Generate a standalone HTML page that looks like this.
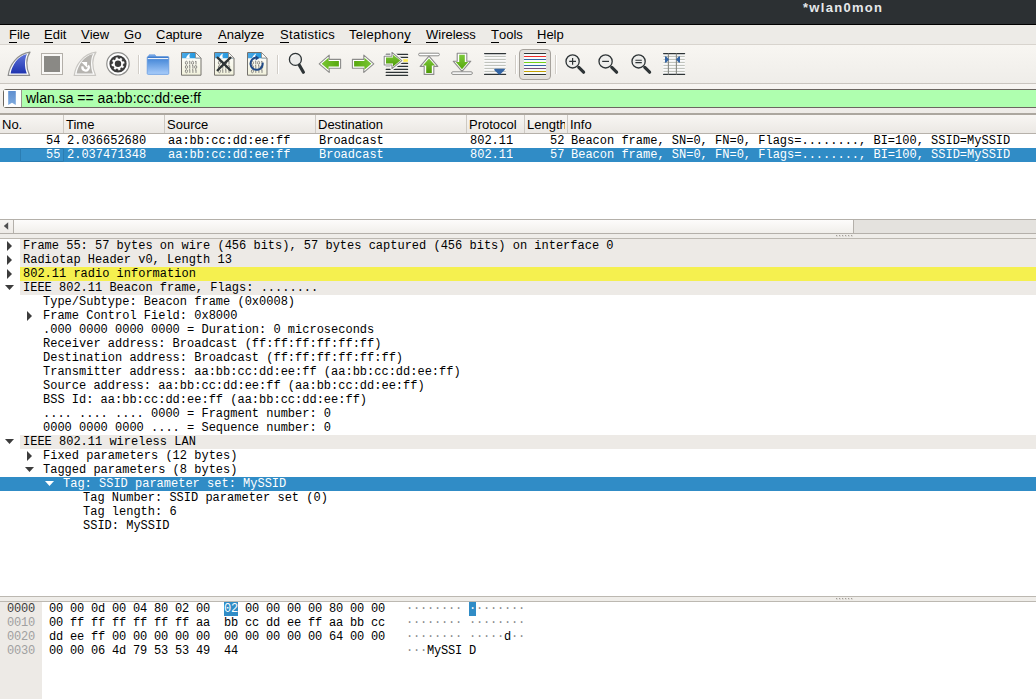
<!DOCTYPE html>
<html><head><meta charset="utf-8">
<style>
*{margin:0;padding:0;box-sizing:border-box}
html,body{width:1036px;height:699px;overflow:hidden;background:#edebe7;font-family:"Liberation Sans",sans-serif;color:#000}
.a{position:absolute}
#title{left:0;top:0;width:1036px;height:24px;background:#2c3033;border-bottom:1px solid #000;height:25px}
#title span{position:absolute;left:803px;top:0px;font:bold 13px "Liberation Sans",sans-serif;letter-spacing:1.3px;color:#e6e8ea}
#menu{left:0;top:25px;width:1036px;height:19px;background:#edebe7}
#menu span{position:absolute;top:1px;font-size:13px;line-height:17px;white-space:pre}
#menu u{text-decoration:none;border-bottom:1px solid #000;display:inline-block;line-height:14px}
#tbline{left:0;top:44px;width:1036px;height:1px;background:#d8d4ce}
#toolbar{left:0;top:45px;width:1036px;height:38px;background:linear-gradient(#f8f6f2,#efede9)}
#tbline2{left:0;top:83px;width:1036px;height:1px;background:#c9c5bf}
#fbar{left:0;top:84px;width:1036px;height:29px;background:linear-gradient(#f7f5f2,#eeebe7)}
#fbox{left:3px;top:89px;width:1100px;height:19px;border:1px solid #6b6660;border-radius:3px;background:#afffaf}
#fbm{left:4px;top:90px;width:18px;height:17px;background:#fff;border-right:1px solid #9c9891}
#ftext{left:26px;top:89px;font-size:14px;line-height:19px;white-space:pre}
#plist{left:0;top:113px;width:1036px;height:121px;background:#fff}
#phead{left:0;top:113px;width:1036px;height:21px;border-top:2px solid #aca79f;background:linear-gradient(#f8f6f3,#ebe8e4);border-bottom:1px solid #b6b1aa}
.ph{position:absolute;top:0;height:18px;font-size:13px;line-height:20px;white-space:pre;padding-left:2px;overflow:hidden;border-right:1px solid #cdc9c3}
.mono{font-family:"Liberation Mono",monospace;font-size:12px;white-space:pre}
.row{position:absolute;left:0;width:1036px;height:14px;line-height:14px}
.sel{background:#308cc6;color:#fff}
.cell{position:absolute;top:0;height:14px;overflow:hidden}
.bx{line-height:14px;letter-spacing:-0.2px}
.dt{font-style:normal;color:#8c8c8c}
.hl{font-weight:normal;background:#308cc6;color:#fff}
</style></head><body>
<div id="title" class="a"><span>*wlan0mon</span></div>
<div id="menu" class="a">
<span style="left:9px"><u>F</u>ile</span>
<span style="left:44px"><u>E</u>dit</span>
<span style="left:81px"><u>V</u>iew</span>
<span style="left:124px"><u>G</u>o</span>
<span style="left:156px"><u>C</u>apture</span>
<span style="left:218px"><u>A</u>nalyze</span>
<span style="left:280px;letter-spacing:0.3px"><u>S</u>tatistics</span>
<span style="left:349px;letter-spacing:0.3px">Telephon<u>y</u></span>
<span style="left:426px"><u>W</u>ireless</span>
<span style="left:491px"><u>T</u>ools</span>
<span style="left:537px"><u>H</u>elp</span>
</div>
<div id="tbline" class="a"></div>
<div id="toolbar" class="a"></div>
<div id="tbline2" class="a"></div>
<svg class="a" style="left:0;top:0" width="700" height="84" viewBox="0 0 700 84">
<defs>
<linearGradient id="gB" x1="0" y1="0" x2="0" y2="1"><stop offset="0" stop-color="#5f74da"/><stop offset="1" stop-color="#1e33af"/></linearGradient>
<linearGradient id="gG" x1="0" y1="0" x2="0" y2="1"><stop offset="0" stop-color="#7cc93a"/><stop offset="1" stop-color="#4e9a06"/></linearGradient>
<linearGradient id="gGd" x1="0" y1="1" x2="0" y2="0"><stop offset="0" stop-color="#7cc93a"/><stop offset="1" stop-color="#58a80e"/></linearGradient>
<linearGradient id="gGh" x1="0" y1="0" x2="1" y2="0"><stop offset="0" stop-color="#78c634"/><stop offset="1" stop-color="#58a80e"/></linearGradient>
<linearGradient id="gF" x1="0" y1="0" x2="0" y2="1"><stop offset="0" stop-color="#3a76c6"/><stop offset="0.2" stop-color="#4f8edb"/><stop offset="1" stop-color="#a9cdfa"/></linearGradient>
<linearGradient id="gP" x1="0" y1="0" x2="0" y2="1"><stop offset="0" stop-color="#ffffff"/><stop offset="1" stop-color="#f2f2dc"/></linearGradient>
<linearGradient id="gBand" x1="0" y1="0" x2="1" y2="0"><stop offset="0" stop-color="#4ba9e6"/><stop offset="1" stop-color="#1592dd"/></linearGradient>
<g id="fin"><path d="M3.2 25.4 C4.5 15 12 4 25 2.2 C21 8 20.5 17 24.6 25.4 Z" stroke-width="1.2" stroke-linejoin="round"/></g>
<g id="paper">
<path d="M4.5 2.5 L18.5 2.5 L24 8 L24 25.2 L4.5 25.2 Z" fill="url(#gP)" stroke="#75726d" stroke-width="1"/>
<path d="M5 3 L18.3 3 L23.5 8.2 L5 8.2 Z" fill="url(#gBand)"/>
<path d="M9 8.2 C10 5.6 11.6 4 13.2 3.6 C12.3 5 12.2 6.8 13 8.2 Z" fill="#fff"/>
<path d="M18.5 2.5 L18.5 8 L24 8 Z" fill="#fbfbf8" stroke="#8a8884" stroke-width="0.8" stroke-linejoin="round"/>
<g><ellipse cx="9.4" cy="12.8" rx="1.05" ry="1.55" fill="none" stroke="#878682" stroke-width="0.95"/><path d="M11.9 11.7 L12.8 11.1 V14.5" fill="none" stroke="#878682" stroke-width="1"/><ellipse cx="15.6" cy="12.8" rx="1.05" ry="1.55" fill="none" stroke="#878682" stroke-width="0.95"/><path d="M18.1 11.7 L19.0 11.1 V14.5" fill="none" stroke="#878682" stroke-width="1"/><ellipse cx="9.4" cy="17.0" rx="1.05" ry="1.55" fill="none" stroke="#878682" stroke-width="0.95"/><path d="M11.9 15.9 L12.8 15.3 V18.7" fill="none" stroke="#878682" stroke-width="1"/><path d="M15.0 15.9 L15.9 15.3 V18.7" fill="none" stroke="#878682" stroke-width="1"/><ellipse cx="18.7" cy="17.0" rx="1.05" ry="1.55" fill="none" stroke="#878682" stroke-width="0.95"/><ellipse cx="9.4" cy="21.2" rx="1.05" ry="1.55" fill="none" stroke="#878682" stroke-width="0.95"/><path d="M11.9 20.1 L12.8 19.5 V22.9" fill="none" stroke="#878682" stroke-width="1"/><path d="M15.0 20.1 L15.9 19.5 V22.9" fill="none" stroke="#878682" stroke-width="1"/><path d="M18.1 20.1 L19.0 19.5 V22.9" fill="none" stroke="#878682" stroke-width="1"/></g>
</g>
<g id="larrow">
<path d="M3.2 13.8 L13.2 5.2 L13.2 9.4 L24.6 9.4 L24.6 18.2 L13.2 18.2 L13.2 22.4 Z" fill="#fff" stroke="#8c8c8a" stroke-width="1.1" stroke-linejoin="round"/>
<path d="M5.6 13.8 L12.6 7.8 L12.6 11.1 L22.9 11.1 L22.9 16.5 L12.6 16.5 L12.6 19.8 Z" fill="url(#gGh)"/>
</g>
<g id="uarrow">
<rect x="3.6" y="3.2" width="20.8" height="2.6" rx="1.3" fill="#fff" stroke="#8c8c8a" stroke-width="1"/>
<path d="M14 6.2 L22.8 16.4 L18.8 16.4 L18.8 24.4 L9.2 24.4 L9.2 16.4 L5.2 16.4 Z" fill="#fff" stroke="#8c8c8a" stroke-width="1.1" stroke-linejoin="round"/>
<path d="M14 8.4 L20.2 15.6 L16.8 15.6 L16.8 22.9 L11.2 22.9 L11.2 15.6 L7.8 15.6 Z" fill="url(#gG)"/>
</g>
<g id="lines">
<rect x="3" y="3" width="22" height="22" fill="#fafafa"/>
<g stroke="#2e3436" stroke-width="1.2" stroke-linecap="round"><path d="M3.6 3.6 H24.6 M3.6 24.4 H24.6"/></g>
<g stroke="#b9bcb4" stroke-width="1"><path d="M3.4 6.4 H24.8 M3.4 9.4 H24.8 M3.4 12.4 H24.8 M3.4 15.4 H24.8 M3.4 18.4 H24.8 M3.4 21.4 H24.8"/></g>
</g>
<g id="mag">
<circle cx="11.6" cy="11.4" r="6.6" fill="#eeeeec" stroke="#2e3436" stroke-width="1.3"/>
<path d="M17.8 17.4 L22.6 22.2" stroke="#2e3436" stroke-width="3.2" stroke-linecap="round"/>
</g>
</defs>
<!-- shark fin -->
<g transform="translate(5,50)"><g fill="#fff" stroke="#8e8e8e"><path d="M3.2 25.4 C4.5 15 12 4 25 2.2 C21 8 20.5 17 24.6 25.4 Z" stroke-width="1.2" stroke-linejoin="round"/></g>
<path d="M5.6 23.6 C7 15 13 6 22 4 C19.5 9 19.3 17 21.8 23.6 Z" fill="url(#gB)"/></g>
<!-- stop -->
<rect x="41.5" y="53.5" width="21" height="21" fill="#f9f8f6" stroke="#b3afa9"/>
<rect x="44" y="56" width="16" height="16" fill="#8a8985"/>
<!-- restart -->
<g transform="translate(71,50)"><g fill="#fbfbfa" stroke="#c9c7c3"><path d="M3.2 25.4 C4.5 15 12 4 25 2.2 C21 8 20.5 17 24.6 25.4 Z" stroke-width="1.2" stroke-linejoin="round"/></g>
<path d="M5.6 23.6 C7 15 13 6 22 4 C19.5 9 19.3 17 21.8 23.6 Z" fill="#b6b4b0"/>
<path d="M11.69 16.34 A3.1 3.1 0 1 0 16.97 15.41" fill="none" stroke="#fff" stroke-width="2.3"/>
<path d="M10.2 12 L16.1 12 L16.1 17.8 Z" fill="#fff"/></g>
<!-- gear -->
<g transform="translate(118,63.8)">
<circle r="11.2" fill="#fff" stroke="#8e8e8c" stroke-width="1.2"/>
<circle r="8.6" fill="#3a3a3a"/>
<path transform="rotate(-12.5)" d="M6.34 -0.85 L6.34 0.85 L4.89 1.05 L4.20 2.71 L5.09 3.88 L3.88 5.09 L2.71 4.20 L1.05 4.89 L0.85 6.34 L-0.85 6.34 L-1.05 4.89 L-2.71 4.20 L-3.88 5.09 L-5.09 3.88 L-4.20 2.71 L-4.89 1.05 L-6.34 0.85 L-6.34 -0.85 L-4.89 -1.05 L-4.20 -2.71 L-5.09 -3.88 L-3.88 -5.09 L-2.71 -4.20 L-1.05 -4.89 L-0.85 -6.34 L0.85 -6.34 L1.05 -4.89 L2.71 -4.20 L3.88 -5.09 L5.09 -3.88 L4.20 -2.71 L4.89 -1.05 Z" fill="#fff" stroke="#fff" stroke-width="0.3" stroke-linejoin="round"/>
<circle r="3.2" fill="#3a3a3a"/>
</g>
<!-- separators -->
<g><rect x="138" y="55" width="1" height="19" fill="#d2cec8"/><rect x="139" y="55" width="1" height="19" fill="#fff"/>
<rect x="277" y="55" width="1" height="19" fill="#d2cec8"/><rect x="278" y="55" width="1" height="19" fill="#fff"/>
<rect x="515" y="55" width="1" height="19" fill="#d2cec8"/><rect x="516" y="55" width="1" height="19" fill="#fff"/>
<rect x="555" y="55" width="1" height="19" fill="#d2cec8"/><rect x="556" y="55" width="1" height="19" fill="#fff"/></g>
<!-- folder -->
<g transform="translate(144,50)">
<path d="M4.2 6.8 L5.2 4.8 L11 4.8 L12.2 6.8 Z" fill="#7aa9e8" stroke="#5a92de" stroke-width="0.6"/>
<rect x="3.2" y="6.6" width="21.6" height="17.8" rx="1" fill="url(#gF)" stroke="#5f97e0" stroke-width="0.7"/>
<rect x="3.8" y="8" width="20.4" height="1.1" fill="#eef3fa"/>
</g>
<!-- files -->
<g transform="translate(177,50)"><g>
<path d="M4.5 2.5 L18.5 2.5 L24 8 L24 25.2 L4.5 25.2 Z" fill="url(#gP)" stroke="#75726d" stroke-width="1"/>
<path d="M5 3 L18.3 3 L23.5 8.2 L5 8.2 Z" fill="url(#gBand)"/>
<path d="M9 8.2 C10 5.6 11.6 4 13.2 3.6 C12.3 5 12.2 6.8 13 8.2 Z" fill="#fff"/>
<path d="M18.5 2.5 L18.5 8 L24 8 Z" fill="#fbfbf8" stroke="#8a8884" stroke-width="0.8" stroke-linejoin="round"/>
<g><ellipse cx="9.4" cy="12.8" rx="1.05" ry="1.55" fill="none" stroke="#878682" stroke-width="0.95"/><path d="M11.9 11.7 L12.8 11.1 V14.5" fill="none" stroke="#878682" stroke-width="1"/><ellipse cx="15.6" cy="12.8" rx="1.05" ry="1.55" fill="none" stroke="#878682" stroke-width="0.95"/><path d="M18.1 11.7 L19.0 11.1 V14.5" fill="none" stroke="#878682" stroke-width="1"/><ellipse cx="9.4" cy="17.0" rx="1.05" ry="1.55" fill="none" stroke="#878682" stroke-width="0.95"/><path d="M11.9 15.9 L12.8 15.3 V18.7" fill="none" stroke="#878682" stroke-width="1"/><path d="M15.0 15.9 L15.9 15.3 V18.7" fill="none" stroke="#878682" stroke-width="1"/><ellipse cx="18.7" cy="17.0" rx="1.05" ry="1.55" fill="none" stroke="#878682" stroke-width="0.95"/><ellipse cx="9.4" cy="21.2" rx="1.05" ry="1.55" fill="none" stroke="#878682" stroke-width="0.95"/><path d="M11.9 20.1 L12.8 19.5 V22.9" fill="none" stroke="#878682" stroke-width="1"/><path d="M15.0 20.1 L15.9 19.5 V22.9" fill="none" stroke="#878682" stroke-width="1"/><path d="M18.1 20.1 L19.0 19.5 V22.9" fill="none" stroke="#878682" stroke-width="1"/></g>
</g></g>
<g transform="translate(210,50)"><g>
<path d="M4.5 2.5 L18.5 2.5 L24 8 L24 25.2 L4.5 25.2 Z" fill="url(#gP)" stroke="#75726d" stroke-width="1"/>
<path d="M5 3 L18.3 3 L23.5 8.2 L5 8.2 Z" fill="url(#gBand)"/>
<path d="M9 8.2 C10 5.6 11.6 4 13.2 3.6 C12.3 5 12.2 6.8 13 8.2 Z" fill="#fff"/>
<path d="M18.5 2.5 L18.5 8 L24 8 Z" fill="#fbfbf8" stroke="#8a8884" stroke-width="0.8" stroke-linejoin="round"/>
<g><ellipse cx="9.4" cy="12.8" rx="1.05" ry="1.55" fill="none" stroke="#878682" stroke-width="0.95"/><path d="M11.9 11.7 L12.8 11.1 V14.5" fill="none" stroke="#878682" stroke-width="1"/><ellipse cx="15.6" cy="12.8" rx="1.05" ry="1.55" fill="none" stroke="#878682" stroke-width="0.95"/><path d="M18.1 11.7 L19.0 11.1 V14.5" fill="none" stroke="#878682" stroke-width="1"/><ellipse cx="9.4" cy="17.0" rx="1.05" ry="1.55" fill="none" stroke="#878682" stroke-width="0.95"/><path d="M11.9 15.9 L12.8 15.3 V18.7" fill="none" stroke="#878682" stroke-width="1"/><path d="M15.0 15.9 L15.9 15.3 V18.7" fill="none" stroke="#878682" stroke-width="1"/><ellipse cx="18.7" cy="17.0" rx="1.05" ry="1.55" fill="none" stroke="#878682" stroke-width="0.95"/><ellipse cx="9.4" cy="21.2" rx="1.05" ry="1.55" fill="none" stroke="#878682" stroke-width="0.95"/><path d="M11.9 20.1 L12.8 19.5 V22.9" fill="none" stroke="#878682" stroke-width="1"/><path d="M15.0 20.1 L15.9 19.5 V22.9" fill="none" stroke="#878682" stroke-width="1"/><path d="M18.1 20.1 L19.0 19.5 V22.9" fill="none" stroke="#878682" stroke-width="1"/></g>
</g>
<path d="M7.6 7.6 L20.4 20.2 M20.4 7.6 L7.6 20.2" stroke="#2e3436" stroke-width="2.3" stroke-linecap="round"/></g>
<g transform="translate(243,50)"><g>
<path d="M4.5 2.5 L18.5 2.5 L24 8 L24 25.2 L4.5 25.2 Z" fill="url(#gP)" stroke="#75726d" stroke-width="1"/>
<path d="M5 3 L18.3 3 L23.5 8.2 L5 8.2 Z" fill="url(#gBand)"/>
<path d="M9 8.2 C10 5.6 11.6 4 13.2 3.6 C12.3 5 12.2 6.8 13 8.2 Z" fill="#fff"/>
<path d="M18.5 2.5 L18.5 8 L24 8 Z" fill="#fbfbf8" stroke="#8a8884" stroke-width="0.8" stroke-linejoin="round"/>
<g><ellipse cx="9.4" cy="12.8" rx="1.05" ry="1.55" fill="none" stroke="#878682" stroke-width="0.95"/><path d="M11.9 11.7 L12.8 11.1 V14.5" fill="none" stroke="#878682" stroke-width="1"/><ellipse cx="15.6" cy="12.8" rx="1.05" ry="1.55" fill="none" stroke="#878682" stroke-width="0.95"/><path d="M18.1 11.7 L19.0 11.1 V14.5" fill="none" stroke="#878682" stroke-width="1"/><ellipse cx="9.4" cy="17.0" rx="1.05" ry="1.55" fill="none" stroke="#878682" stroke-width="0.95"/><path d="M11.9 15.9 L12.8 15.3 V18.7" fill="none" stroke="#878682" stroke-width="1"/><path d="M15.0 15.9 L15.9 15.3 V18.7" fill="none" stroke="#878682" stroke-width="1"/><ellipse cx="18.7" cy="17.0" rx="1.05" ry="1.55" fill="none" stroke="#878682" stroke-width="0.95"/><ellipse cx="9.4" cy="21.2" rx="1.05" ry="1.55" fill="none" stroke="#878682" stroke-width="0.95"/><path d="M11.9 20.1 L12.8 19.5 V22.9" fill="none" stroke="#878682" stroke-width="1"/><path d="M15.0 20.1 L15.9 19.5 V22.9" fill="none" stroke="#878682" stroke-width="1"/><path d="M18.1 20.1 L19.0 19.5 V22.9" fill="none" stroke="#878682" stroke-width="1"/></g>
</g>
<path d="M19.6 12.6 A6.1 6.1 0 1 1 13.4 7.6" fill="none" stroke="#204a87" stroke-width="2"/>
<path d="M12.6 5.2 L16.4 8 L12.6 10.6 Z" fill="#204a87"/></g>
<!-- find -->
<g transform="translate(283,50)">
<circle cx="12.4" cy="9.4" r="6" fill="#ececea" stroke="#2e3436" stroke-width="1.3"/>
<path d="M8.6 7.4 Q9.6 5.6 11.8 5.4" fill="none" stroke="#fff" stroke-width="0.9"/>
<path d="M16.4 15.2 L20.4 22.2" stroke="#2e3436" stroke-width="3.2" stroke-linecap="round"/>
</g>
<!-- back / fwd -->
<g transform="translate(316,50)"><g>
<path d="M3.2 13.8 L13.2 5.2 L13.2 9.4 L24.6 9.4 L24.6 18.2 L13.2 18.2 L13.2 22.4 Z" fill="#fff" stroke="#8c8c8a" stroke-width="1.1" stroke-linejoin="round"/>
<path d="M5.6 13.8 L12.6 7.8 L12.6 11.1 L22.9 11.1 L22.9 16.5 L12.6 16.5 L12.6 19.8 Z" fill="url(#gGh)"/>
</g></g>
<g transform="translate(377,50) scale(-1,1)"><g>
<path d="M3.2 13.8 L13.2 5.2 L13.2 9.4 L24.6 9.4 L24.6 18.2 L13.2 18.2 L13.2 22.4 Z" fill="#fff" stroke="#8c8c8a" stroke-width="1.1" stroke-linejoin="round"/>
<path d="M5.6 13.8 L12.6 7.8 L12.6 11.1 L22.9 11.1 L22.9 16.5 L12.6 16.5 L12.6 19.8 Z" fill="url(#gGh)"/>
</g></g>
<!-- jump -->
<g transform="translate(382,50)">
<g stroke="#2e3436" stroke-width="1.2" stroke-linecap="round"><path d="M4.2 4.4 H25.6 M4.2 7.4 H25.6 M4.2 13.4 H25.6 M4.2 16.4 H25.6 M4.2 19.4 H25.6 M4.2 22.4 H25.6 M4.2 25.4 H25.6"/></g>
<rect x="4" y="9.2" width="22" height="2.6" fill="#fff"/>
<rect x="20" y="9.2" width="5.9" height="2.6" fill="#fce94f"/>
<path d="M2.2 6.2 L10 6.2 L10 2.4 L19.8 10.6 L10 18.6 L10 15 L2.2 15 Z" fill="#fff" stroke="#fafafa" stroke-width="3.4" stroke-linejoin="round"/><path d="M2.2 6.2 L10 6.2 L10 2.4 L19.8 10.6 L10 18.6 L10 15 L2.2 15 Z" fill="#fff" stroke="#8c8c8a" stroke-width="1.1" stroke-linejoin="round"/>
<path d="M4 7.6 L11 7.6 L11 4.8 L18.4 10.6 L11 16.4 L11 13.6 L4 13.6 Z" fill="url(#gG)"/>
</g>
<!-- up / down -->
<g transform="translate(415,50)"><g>
<rect x="3.6" y="3.2" width="20.8" height="2.6" rx="1.3" fill="#fff" stroke="#8c8c8a" stroke-width="1"/>
<path d="M14 6.2 L22.8 16.4 L18.8 16.4 L18.8 24.4 L9.2 24.4 L9.2 16.4 L5.2 16.4 Z" fill="#fff" stroke="#8c8c8a" stroke-width="1.1" stroke-linejoin="round"/>
<path d="M14 8.4 L20.2 15.6 L16.8 15.6 L16.8 22.9 L11.2 22.9 L11.2 15.6 L7.8 15.6 Z" fill="url(#gG)"/>
</g></g>
<g transform="translate(448,77.6) scale(1,-1)">
<rect x="3.6" y="3.2" width="20.8" height="2.6" rx="1.3" fill="#fff" stroke="#8c8c8a" stroke-width="1"/>
<path d="M14 6.2 L22.8 16.4 L18.8 16.4 L18.8 24.4 L9.2 24.4 L9.2 16.4 L5.2 16.4 Z" fill="#fff" stroke="#8c8c8a" stroke-width="1.1" stroke-linejoin="round"/>
<path d="M14 8.4 L20.2 15.6 L16.8 15.6 L16.8 22.9 L11.2 22.9 L11.2 15.6 L7.8 15.6 Z" fill="url(#gGd)"/>
</g>
<!-- autoscroll -->
<g transform="translate(481,50)"><g>
<rect x="3" y="3" width="22" height="22" fill="#fafafa"/>
<g stroke="#2e3436" stroke-width="1.2" stroke-linecap="round"><path d="M3.6 3.6 H24.6 M3.6 24.4 H24.6"/></g>
<g stroke="#b9bcb4" stroke-width="1"><path d="M3.4 6.4 H24.8 M3.4 9.4 H24.8 M3.4 12.4 H24.8 M3.4 15.4 H24.8 M3.4 18.4 H24.8 M3.4 21.4 H24.8"/></g>
</g>
<path d="M13.2 19.6 C13.2 19 13.6 18.8 14.4 18.8 L22.8 18.8 C23.8 18.8 24.2 19.2 23.8 19.8 C22 21.8 20 23.4 19.2 24.6 L17.8 24.6 C17 23.4 15 21.8 13.4 20.2 Z" fill="#3465a4"/>
</g>
<!-- colorize -->
<rect x="519.5" y="49.5" width="31" height="30" rx="3.5" fill="#e2dfdb" stroke="#a6a29c"/>
<rect x="524" y="52.6" width="22" height="22.8" fill="#f7fbfb"/>
<g stroke-width="1.1" stroke-linecap="round">
<path d="M524.4 53.5 H545.6" stroke="#2e3436"/><path d="M524.4 56.5 H545.6" stroke="#ef2929"/><path d="M524.4 59.5 H545.6" stroke="#3465a4"/><path d="M524.4 62.5 H545.6" stroke="#73d216"/><path d="M524.4 65.5 H545.6" stroke="#3465a4"/><path d="M524.4 68.5 H545.6" stroke="#75507b"/><path d="M524.4 71.5 H545.6" stroke="#c4a000"/><path d="M524.4 74.5 H545.6" stroke="#2e3436"/>
</g>
<!-- zoom -->
<g transform="translate(561,50)"><g>
<circle cx="11.6" cy="11.4" r="6.6" fill="#eeeeec" stroke="#2e3436" stroke-width="1.3"/>
<path d="M17.8 17.4 L22.6 22.2" stroke="#2e3436" stroke-width="3.2" stroke-linecap="round"/>
</g><path d="M8.2 11.4 H15 M11.6 8 V14.8" stroke="#2e3436" stroke-width="1.2"/></g>
<g transform="translate(594,50)"><g>
<circle cx="11.6" cy="11.4" r="6.6" fill="#eeeeec" stroke="#2e3436" stroke-width="1.3"/>
<path d="M17.8 17.4 L22.6 22.2" stroke="#2e3436" stroke-width="3.2" stroke-linecap="round"/>
</g><path d="M8.2 11.4 H15" stroke="#2e3436" stroke-width="1.2"/></g>
<g transform="translate(627,50)"><g>
<circle cx="11.6" cy="11.4" r="6.6" fill="#eeeeec" stroke="#2e3436" stroke-width="1.3"/>
<path d="M17.8 17.4 L22.6 22.2" stroke="#2e3436" stroke-width="3.2" stroke-linecap="round"/>
</g><path d="M8.4 10.3 H14.8 M8.4 12.6 H14.8" stroke="#2e3436" stroke-width="1.1"/></g>
<!-- resize columns -->
<g transform="translate(660,50)"><g>
<rect x="3" y="3" width="22" height="22" fill="#fafafa"/>
<g stroke="#2e3436" stroke-width="1.2" stroke-linecap="round"><path d="M3.6 3.6 H24.6 M3.6 24.4 H24.6"/></g>
<g stroke="#b9bcb4" stroke-width="1"><path d="M3.4 6.4 H24.8 M3.4 9.4 H24.8 M3.4 12.4 H24.8 M3.4 15.4 H24.8 M3.4 18.4 H24.8 M3.4 21.4 H24.8"/></g>
</g>
<path d="M8.4 3.4 V24.6 M16.4 3.4 V24.6" stroke="#888a85" stroke-width="1.1"/>
<path d="M5 6.4 L6 6.2 L9 9.6 L6 12.8 L5 12.6 Z" fill="#3465a4"/>
<path d="M20 6.4 L19 6.2 L16 9.6 L19 12.8 L20 12.6 Z" fill="#3465a4"/>
</g>
</svg>

<div id="fbar" class="a"></div>
<div id="fbox" class="a"></div>
<div id="fbm" class="a"></div>
<svg class="a" style="left:0;top:84px" width="24" height="26"><defs><linearGradient id="gBm" x1="0" y1="0" x2="0" y2="1"><stop offset="0" stop-color="#5f8fd0"/><stop offset="1" stop-color="#7eaade"/></linearGradient></defs><path d="M8.2 7 H15.8 V21 L12 18.8 L8.2 21 Z" fill="url(#gBm)"/></svg>
<div id="ftext" class="a">wlan.sa == aa:bb:cc:dd:ee:ff</div>

<div id="plist" class="a"></div>
<div id="phead" class="a">
<div class="ph" style="left:0;width:64px">No.</div>
<div class="ph" style="left:64px;width:101px">Time</div>
<div class="ph" style="left:165px;width:151px">Source</div>
<div class="ph" style="left:316px;width:151px">Destination</div>
<div class="ph" style="left:467px;width:58px">Protocol</div>
<div class="ph" style="left:525px;width:43px"><span style="display:inline-block;width:38px;overflow:hidden;vertical-align:top">Length</span></div>
<div class="ph" style="left:568px;width:600px;border-right:none">Info</div>
</div>

<div class="row mono" style="top:134px">
<span class="cell" style="left:46px">54</span><span class="cell" style="left:67px">2.036652680</span><span class="cell" style="left:168px">aa:bb:cc:dd:ee:ff</span><span class="cell" style="left:319px">Broadcast</span><span class="cell" style="left:470px">802.11</span><span class="cell" style="left:550px">52</span><span class="cell" style="left:571px">Beacon frame, SN=0, FN=0, Flags=........, BI=100, SSID=MySSID</span>
</div>
<div class="row mono sel" style="top:148px">
<div class="a" style="left:20px;top:0;width:44px;height:14px;border:1px solid #2b7db2;border-radius:1px;background:#3590ca"></div>
<span class="cell" style="left:46px">55</span><span class="cell" style="left:67px">2.037471348</span><span class="cell" style="left:168px">aa:bb:cc:dd:ee:ff</span><span class="cell" style="left:319px">Broadcast</span><span class="cell" style="left:470px">802.11</span><span class="cell" style="left:550px">57</span><span class="cell" style="left:571px">Beacon frame, SN=0, FN=0, Flags=........, BI=100, SSID=MySSID</span>
</div>
<!-- hscroll -->
<div class="a" style="left:0;top:219px;width:1036px;height:15px;background:#e4e2de;border-top:1px solid #b4b0aa;border-bottom:1px solid #b4b0aa"></div>
<div class="a" style="left:0;top:220px;width:14px;height:13px;background:linear-gradient(#f7f5f2,#eeebe7);border-right:1px solid #b4b0aa"></div>
<svg class="a" style="left:3px;top:221px" width="7" height="10"><path d="M0.8 5 L5.2 1.2 L5.2 8.8 Z" fill="#505050"/></svg>
<div class="a" style="left:14px;top:220px;width:840px;height:13px;background:linear-gradient(#fdfcfb,#f1efeb);border-right:1px solid #b4b0aa"></div>
<!-- splitter 1 -->
<div class="a" style="left:0;top:234px;width:1036px;height:4px;background:#efede9"></div>
<div class="a" style="left:0;top:238px;width:1036px;height:1px;background:#bcb8b1"></div>
<div class="a" style="left:836px;top:235px;width:2px;height:2px;background:#dedbd6"></div><div class="a" style="left:836px;top:235px;width:1px;height:1px;background:#a29e98"></div><div class="a" style="left:839px;top:235px;width:2px;height:2px;background:#dedbd6"></div><div class="a" style="left:839px;top:235px;width:1px;height:1px;background:#a29e98"></div><div class="a" style="left:842px;top:235px;width:2px;height:2px;background:#dedbd6"></div><div class="a" style="left:842px;top:235px;width:1px;height:1px;background:#a29e98"></div><div class="a" style="left:845px;top:235px;width:2px;height:2px;background:#dedbd6"></div><div class="a" style="left:845px;top:235px;width:1px;height:1px;background:#a29e98"></div><div class="a" style="left:848px;top:235px;width:2px;height:2px;background:#dedbd6"></div><div class="a" style="left:848px;top:235px;width:1px;height:1px;background:#a29e98"></div><div class="a" style="left:851px;top:235px;width:2px;height:2px;background:#dedbd6"></div><div class="a" style="left:851px;top:235px;width:1px;height:1px;background:#a29e98"></div>
<div class="a" style="left:0;top:239px;width:1036px;height:357px;background:#fff"></div>
<div class="a" style="left:20px;top:239px;width:1016px;height:14px;background:#edeae6"></div>
<svg class="a" style="left:4px;top:239px" width="12" height="14"><path d="M3 2 L8 7 L3 12 Z" fill="#3c3c3c"/></svg>
<div class="a mono" style="left:23px;top:239px;line-height:14px;color:#000">Frame 55: 57 bytes on wire (456 bits), 57 bytes captured (456 bits) on interface 0</div>
<div class="a" style="left:20px;top:253px;width:1016px;height:14px;background:#edeae6"></div>
<svg class="a" style="left:4px;top:253px" width="12" height="14"><path d="M3 2 L8 7 L3 12 Z" fill="#3c3c3c"/></svg>
<div class="a mono" style="left:23px;top:253px;line-height:14px;color:#000">Radiotap Header v0, Length 13</div>
<div class="a" style="left:20px;top:267px;width:1016px;height:14px;background:#f5f04f"></div>
<svg class="a" style="left:4px;top:267px" width="12" height="14"><path d="M3 2 L8 7 L3 12 Z" fill="#3c3c3c"/></svg>
<div class="a mono" style="left:23px;top:267px;line-height:14px;color:#000">802.11 radio information</div>
<div class="a" style="left:20px;top:281px;width:1016px;height:14px;background:#edeae6"></div>
<svg class="a" style="left:4px;top:281px" width="12" height="14"><path d="M1 4 L10 4 L5.5 9 Z" fill="#3c3c3c"/></svg>
<div class="a mono" style="left:23px;top:281px;line-height:14px;color:#000">IEEE 802.11 Beacon frame, Flags: ........</div>
<div class="a mono" style="left:43px;top:295px;line-height:14px;color:#000">Type/Subtype: Beacon frame (0x0008)</div>
<svg class="a" style="left:24px;top:309px" width="12" height="14"><path d="M3 2 L8 7 L3 12 Z" fill="#3c3c3c"/></svg>
<div class="a mono" style="left:43px;top:309px;line-height:14px;color:#000">Frame Control Field: 0x8000</div>
<div class="a mono" style="left:43px;top:323px;line-height:14px;color:#000">.000 0000 0000 0000 = Duration: 0 microseconds</div>
<div class="a mono" style="left:43px;top:337px;line-height:14px;color:#000">Receiver address: Broadcast (ff:ff:ff:ff:ff:ff)</div>
<div class="a mono" style="left:43px;top:351px;line-height:14px;color:#000">Destination address: Broadcast (ff:ff:ff:ff:ff:ff)</div>
<div class="a mono" style="left:43px;top:365px;line-height:14px;color:#000">Transmitter address: aa:bb:cc:dd:ee:ff (aa:bb:cc:dd:ee:ff)</div>
<div class="a mono" style="left:43px;top:379px;line-height:14px;color:#000">Source address: aa:bb:cc:dd:ee:ff (aa:bb:cc:dd:ee:ff)</div>
<div class="a mono" style="left:43px;top:393px;line-height:14px;color:#000">BSS Id: aa:bb:cc:dd:ee:ff (aa:bb:cc:dd:ee:ff)</div>
<div class="a mono" style="left:43px;top:407px;line-height:14px;color:#000">.... .... .... 0000 = Fragment number: 0</div>
<div class="a mono" style="left:43px;top:421px;line-height:14px;color:#000">0000 0000 0000 .... = Sequence number: 0</div>
<div class="a" style="left:20px;top:435px;width:1016px;height:14px;background:#edeae6"></div>
<svg class="a" style="left:4px;top:435px" width="12" height="14"><path d="M1 4 L10 4 L5.5 9 Z" fill="#3c3c3c"/></svg>
<div class="a mono" style="left:23px;top:435px;line-height:14px;color:#000">IEEE 802.11 wireless LAN</div>
<svg class="a" style="left:24px;top:449px" width="12" height="14"><path d="M3 2 L8 7 L3 12 Z" fill="#3c3c3c"/></svg>
<div class="a mono" style="left:43px;top:449px;line-height:14px;color:#000">Fixed parameters (12 bytes)</div>
<svg class="a" style="left:24px;top:463px" width="12" height="14"><path d="M1 4 L10 4 L5.5 9 Z" fill="#3c3c3c"/></svg>
<div class="a mono" style="left:43px;top:463px;line-height:14px;color:#000">Tagged parameters (8 bytes)</div>
<div class="a" style="left:0;top:477px;width:1036px;height:14px;background:#308cc6"></div>
<svg class="a" style="left:44px;top:477px" width="12" height="14"><path d="M1 4 L10 4 L5.5 9 Z" fill="#fff"/></svg>
<div class="a mono" style="left:63px;top:477px;line-height:14px;color:#fff">Tag: SSID parameter set: MySSID</div>
<div class="a mono" style="left:83px;top:491px;line-height:14px;color:#000">Tag Number: SSID parameter set (0)</div>
<div class="a mono" style="left:83px;top:505px;line-height:14px;color:#000">Tag length: 6</div>
<div class="a mono" style="left:83px;top:519px;line-height:14px;color:#000">SSID: MySSID</div>
<div class="a" style="left:0;top:596px;width:1036px;height:6px;background:#efede9;border-top:1px solid #bcb8b1;border-bottom:1px solid #bcb8b1"></div>
<div class="a" style="left:836px;top:598px;width:2px;height:2px;background:#dedbd6"></div><div class="a" style="left:836px;top:598px;width:1px;height:1px;background:#a29e98"></div><div class="a" style="left:839px;top:598px;width:2px;height:2px;background:#dedbd6"></div><div class="a" style="left:839px;top:598px;width:1px;height:1px;background:#a29e98"></div><div class="a" style="left:842px;top:598px;width:2px;height:2px;background:#dedbd6"></div><div class="a" style="left:842px;top:598px;width:1px;height:1px;background:#a29e98"></div><div class="a" style="left:845px;top:598px;width:2px;height:2px;background:#dedbd6"></div><div class="a" style="left:845px;top:598px;width:1px;height:1px;background:#a29e98"></div><div class="a" style="left:848px;top:598px;width:2px;height:2px;background:#dedbd6"></div><div class="a" style="left:848px;top:598px;width:1px;height:1px;background:#a29e98"></div><div class="a" style="left:851px;top:598px;width:2px;height:2px;background:#dedbd6"></div><div class="a" style="left:851px;top:598px;width:1px;height:1px;background:#a29e98"></div>
<div class="a" style="left:0;top:602px;width:1036px;height:97px;background:#fff"></div>
<div class="a" style="left:0;top:602px;width:42px;height:97px;background:#edeae6"></div>
<div class="a mono bx" style="left:7px;top:602px;color:#3c3c3c">0000</div>
<div class="a mono bx" style="left:49px;top:602px">00 00 0d 00 04 80 02 00  <b class="hl">02</b> 00 00 00 00 80 00 00</div>
<div class="a mono bx" style="left:406px;top:602px"><i class="dt">········</i> <b class="hl">·</b><i class="dt">·······</i></div>
<div class="a mono bx" style="left:7px;top:616px;color:#a0a0a0">0010</div>
<div class="a mono bx" style="left:49px;top:616px">00 ff ff ff ff ff ff aa  bb cc dd ee ff aa bb cc</div>
<div class="a mono bx" style="left:406px;top:616px"><i class="dt">········</i> <i class="dt">········</i></div>
<div class="a mono bx" style="left:7px;top:630px;color:#a0a0a0">0020</div>
<div class="a mono bx" style="left:49px;top:630px">dd ee ff 00 00 00 00 00  00 00 00 00 00 64 00 00</div>
<div class="a mono bx" style="left:406px;top:630px"><i class="dt">········</i> <i class="dt">·····</i>d<i class="dt">··</i></div>
<div class="a mono bx" style="left:7px;top:644px;color:#a0a0a0">0030</div>
<div class="a mono bx" style="left:49px;top:644px">00 00 06 4d 79 53 53 49  44</div>
<div class="a mono bx" style="left:406px;top:644px"><i class="dt">···</i>MySSI D</div>
</body></html>
